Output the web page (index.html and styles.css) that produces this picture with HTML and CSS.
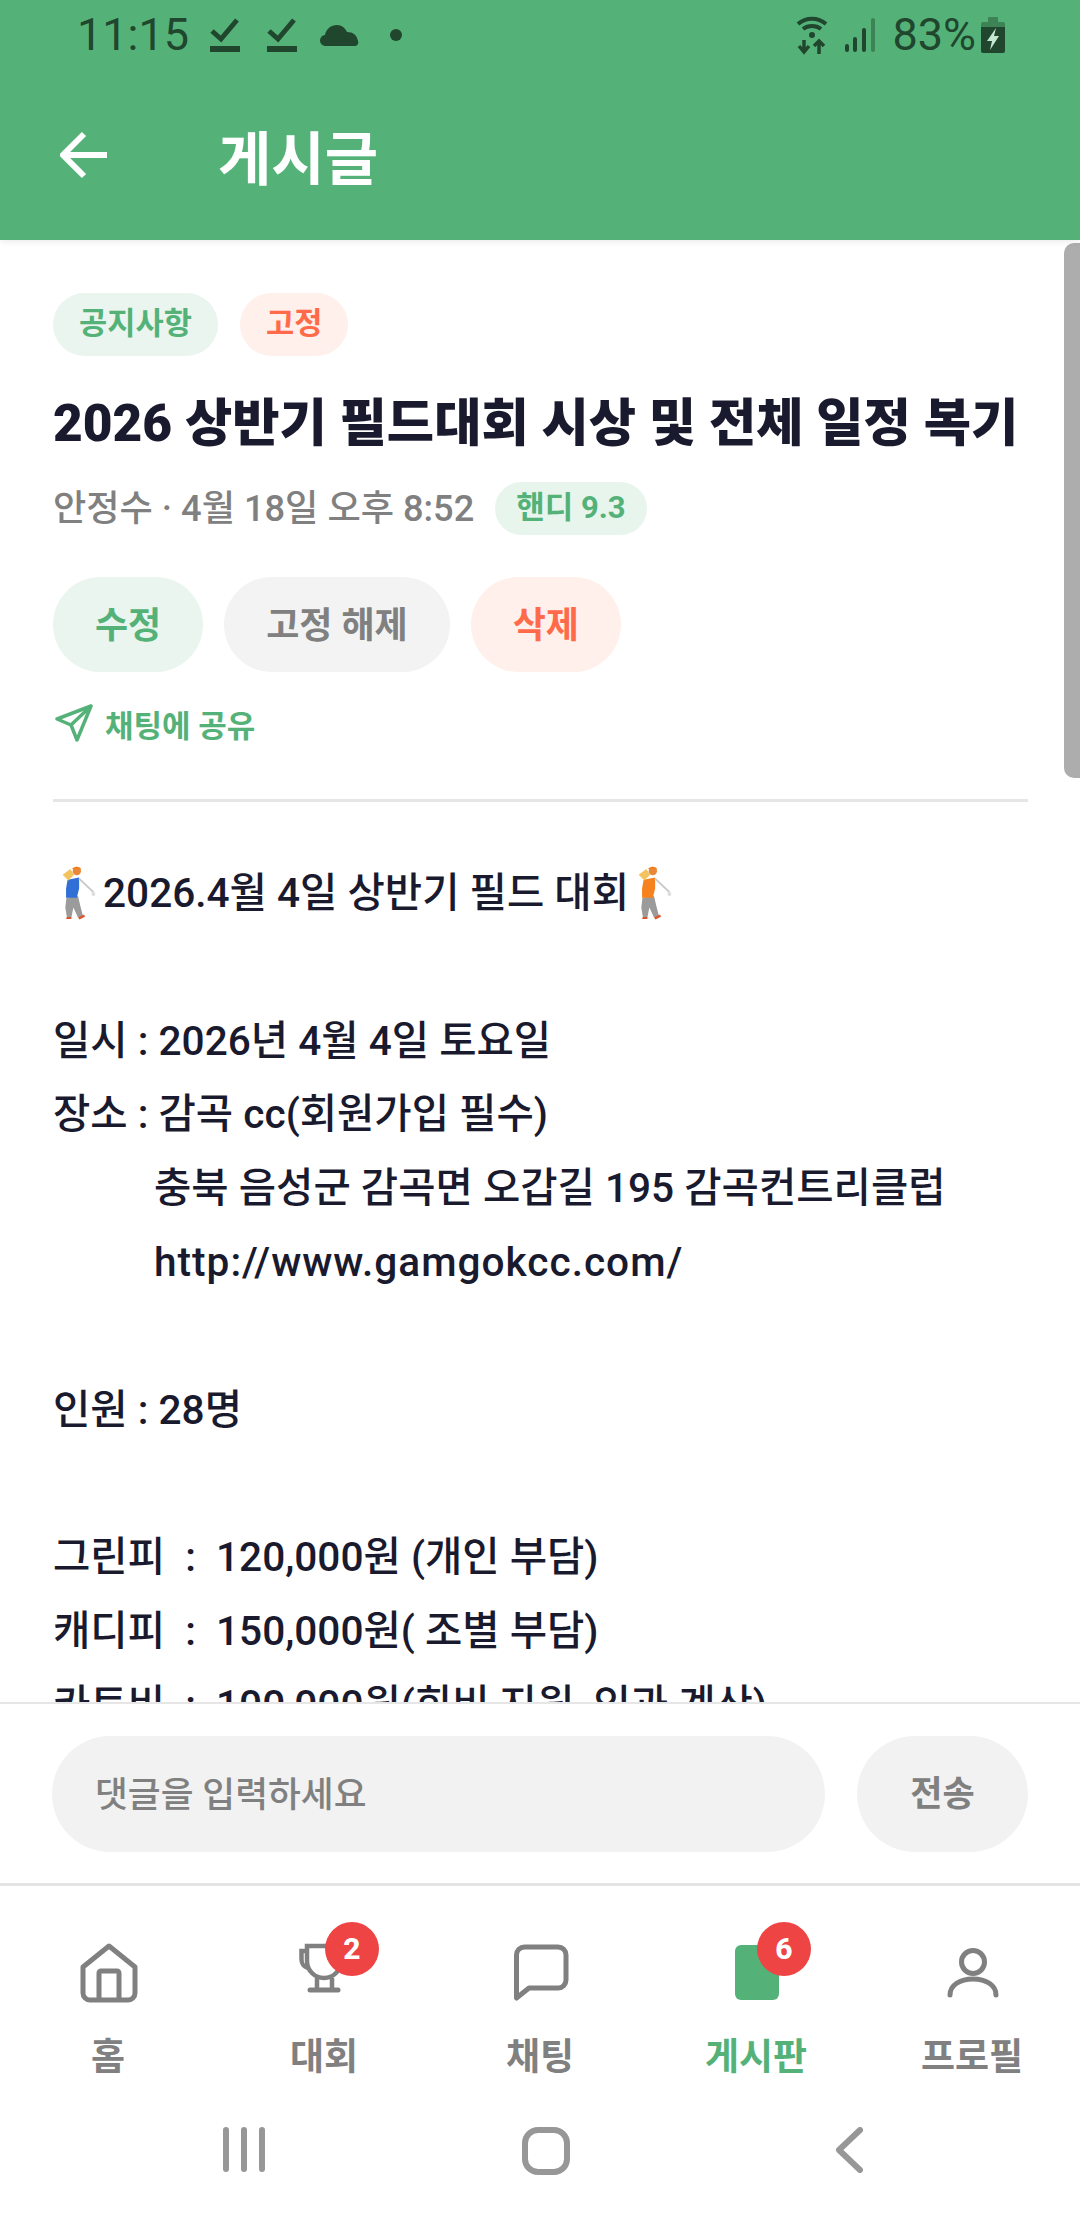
FILE: index.html
```html
<!DOCTYPE html>
<html lang="ko">

<head>
    <meta charset="UTF-8">
    <meta name="viewport" content="width=device-width, initial-scale=1.0">
    <title>게시글</title>
    <link rel="stylesheet" href="styles.css">
</head>

<body>
    <div class="app">
        <!-- 상단 -->
        <header class="top">
            <div class="status">
                <div class="status-left">
                    <span class="time">11:15</span>
                    <svg class="ic-check" viewBox="0 0 30 36"><path d="M2 14l9 8L27 3" fill="none" stroke="#20462d" stroke-width="5"/><rect y="29" width="30" height="6" fill="#20462d"/></svg>
                    <svg class="ic-check" viewBox="0 0 30 36"><path d="M2 14l9 8L27 3" fill="none" stroke="#20462d" stroke-width="5"/><rect y="29" width="30" height="6" fill="#20462d"/></svg>
                    <svg class="ic-cloud" viewBox="0 0 40 22"><path d="M7 22a5.500 5.500 0 0 1-1-11c1-6 6-10 12-10 5 0 8 3 10 7 6 0 10 3 11 9 1 3-1 5-3 5z" fill="#20462d"/></svg>
                    <span class="dot"></span>
                </div>
                <div class="status-right">
                    <svg class="ic-wifi" viewBox="0 0 32 40">
                        <path d="M2 9c8-7 20-7 28 0M7 14c5-4 13-4 18 0" fill="none" stroke="#20462d" stroke-width="4"/>
                        <circle cx="16" cy="20" r="3" fill="#20462d"/>
                        <path d="M8 25v12M3 31l5 6 5-6M23 39V26M18 31l5-5 5 5" fill="none" stroke="#20462d" stroke-width="3.500"/>
                    </svg>
                    <svg class="ic-signal" viewBox="0 0 30 34">
                        <rect x="0" y="26" width="4" height="8" rx="2" fill="#20462d"/>
                        <rect x="8" y="19" width="4" height="15" rx="2" fill="#20462d"/>
                        <rect x="17" y="10" width="4" height="24" rx="2" fill="#20462d"/>
                        <rect x="26" y="0" width="4" height="34" rx="2" fill="#3d8355"/>
                    </svg>
                    <span class="pct">83%</span>
                    <svg class="ic-batt" viewBox="0 0 24 36">
                        <path d="M7 0h10v5h5a2 2 0 0 1 2 2v3H0V7a2 2 0 0 1 2-2h5z" fill="#3d8355"/>
                        <path d="M0 10h24v24a2 2 0 0 1-2 2H2a2 2 0 0 1-2-2z" fill="#20462d"/>
                        <path d="M15 11L6 24h5l-2 9 9-14h-5z" fill="#c5e6d0"/>
                    </svg>
                </div>
            </div>
            <div class="toolbar">
                <svg class="back" viewBox="0 0 48 48"><path d="M47 24H4M24 3L3 24l21 21" fill="none" stroke="#fff" stroke-width="6"/></svg>
                <h1>게시글</h1>
            </div>
        </header>

        <!-- 본문 -->
        <main class="content">
            <div class="tags">
                <span class="tag tag-green">공지사항</span>
                <span class="tag tag-red">고정</span>
            </div>
            <h2 class="title">2026 상반기 필드대회 시상 및 전체 일정 복기</h2>
            <div class="meta">
                <span class="meta-text">안정수 · 4월 18일 오후 8:52</span>
                <span class="handy">핸디 9.3</span>
            </div>
            <div class="btns">
                <a class="btn btn-green">수정</a>
                <a class="btn btn-gray">고정 해제</a>
                <a class="btn btn-red">삭제</a>
            </div>
            <a class="share">
                <svg viewBox="0 0 38 38"><path d="M36 2L2 15l14 6 6 15zM36 2L16 21" fill="none" stroke="#54b279" stroke-width="3.500" stroke-linejoin="round" stroke-linecap="round"/></svg>
                채팅에 공유
            </a>
            <hr class="line">
            <div class="body">
                <p>
                    <svg class="golfer" viewBox="50 50 130 130"><path d="M85 125l30-5 7 30 6 22-13 4-12-26-5 25H86l-4-25z" fill="#9b9b9b"/><path d="M86 175h12v5H84zM115 176l16-8 2 6-14 7z" fill="#d8562a"/><path d="M88 78l30-6v28l-6 25H84v-25z" fill="#2f6fd6"/><path d="M75 65l20-15 10 15-15 15z" fill="#f2c35e"/><path d="M118 75l37 35" stroke="#c9c9c9" stroke-width="5" fill="none"/><circle cx="155" cy="115" r="5" fill="#ddd"/><circle cx="112" cy="55" r="11" fill="#e8893a"/><path d="M99 50q12-12 25 0z" fill="#f07f1f"/></svg>2026.4월 4일 상반기 필드 대회<svg class="golfer" viewBox="50 50 130 130"><path d="M85 125l30-5 7 30 6 22-13 4-12-26-5 25H86l-4-25z" fill="#9b9b9b"/><path d="M86 175h12v5H84zM115 176l16-8 2 6-14 7z" fill="#d8562a"/><path d="M88 78l30-6v28l-6 25H84v-25z" fill="#f5821f"/><path d="M75 65l20-15 10 15-15 15z" fill="#f2c35e"/><path d="M118 75l37 35" stroke="#c9c9c9" stroke-width="5" fill="none"/><circle cx="155" cy="115" r="5" fill="#ddd"/><circle cx="112" cy="55" r="11" fill="#e8893a"/><path d="M99 50q12-12 25 0z" fill="#f07f1f"/></svg>
                </p>
                <p>&nbsp;</p>
                <p>일시 : 2026년 4월 4일 토요일</p>
                <p>장소 : 감곡 cc(회원가입 필수)</p>
                <p class="indent">충북 음성군 감곡면 오갑길 195 감곡컨트리클럽</p>
                <p class="indent url">http://www.gamgokcc.com/</p>
                <p>&nbsp;</p>
                <p>인원 : 28명</p>
                <p>&nbsp;</p>
                <p>그린피&nbsp; :&nbsp; 120,000원 (개인 부담)</p>
                <p>캐디피&nbsp; :&nbsp; 150,000원( 조별 부담)</p>
                <p>카트비&nbsp; :&nbsp; 100,000원(회비 지원, 인과 계산)</p>
            </div>
            <div class="thumb"></div>
        </main>

        <!-- 댓글 입력 -->
        <div class="comment">
            <div class="input">댓글을 입력하세요</div>
            <a class="send">전송</a>
        </div>

        <!-- 하단 탭 -->
        <nav class="tabs">
            <a class="tab">
                <span class="tab-ic">
                    <svg viewBox="0 0 60 60"><path d="M5 24L31 3l26 21v26a7 7 0 0 1-7 7H12a7 7 0 0 1-7-7zM21 57V30a2 2 0 0 1 2-2h16a2 2 0 0 1 2 2v27" fill="none" stroke="#808080" stroke-width="5" stroke-linejoin="round"/></svg>
                </span>
                홈
            </a>
            <a class="tab">
                <span class="tab-ic">
                    <svg viewBox="0 0 60 60"><path d="M13 3h34v15a17 17 0 0 1-34 0zM13 8H7.500v8a9 9 0 0 0 6 9M23 35v11M38 35v11" fill="none" stroke="#808080" stroke-width="4.500"/><path d="M16 47h28" stroke="#808080" stroke-width="5" stroke-linecap="round"/></svg>
                    <span class="badge">2</span>
                </span>
                대회
            </a>
            <a class="tab">
                <span class="tab-ic">
                    <svg viewBox="0 0 60 60"><path d="M6.500 12a8 8 0 0 1 8-8H48a8 8 0 0 1 8 8v25a8 8 0 0 1-8 8H19L6.500 55z" fill="none" stroke="#808080" stroke-width="5" stroke-linejoin="round"/></svg>
                </span>
                채팅
            </a>
            <a class="tab tab-on">
                <span class="tab-ic">
                    <svg viewBox="0 0 60 60"><rect x="9" y="2" width="44" height="55" rx="6" fill="#54b279"/></svg>
                    <span class="badge">6</span>
                </span>
                게시판
            </a>
            <a class="tab">
                <span class="tab-ic">
                    <svg viewBox="0 0 60 60"><circle cx="31" cy="19" r="11.500" fill="none" stroke="#808080" stroke-width="5"/><path d="M8 52c0-10 10-16 23-16s23 6 23 16" fill="none" stroke="#808080" stroke-width="5" stroke-linecap="round"/></svg>
                </span>
                프로필
            </a>
        </nav>

        <!-- 시스템 내비 -->
        <div class="sysnav">
            <svg class="sys-recent" viewBox="0 0 42 45"><path d="M3 3v39M21 3v39M39 3v39" stroke="#979797" stroke-width="6" stroke-linecap="round"/></svg>
            <svg class="sys-home" viewBox="0 0 48 48"><rect x="3" y="3" width="42" height="42" rx="13" fill="none" stroke="#979797" stroke-width="6"/></svg>
            <svg class="sys-back" viewBox="0 0 28 46"><path d="M25 3L4 23l21 20" fill="none" stroke="#979797" stroke-width="6" stroke-linecap="round" stroke-linejoin="round"/></svg>
        </div>
    </div>
</body>

</html>
```

FILE: styles.css
```css
* {
    margin: 0;
    padding: 0;
    box-sizing: border-box;
}

body {
    font-family: Roboto, "Noto Sans CJK KR", sans-serif;
    background: #fff;
}

.app {
    width: 1080px;
    height: 2220px;
    display: flex;
    flex-direction: column;
    overflow: hidden;
}

/* 상단 */
.top {
    height: 240px;
    background: #54b279;
    flex: none;
    position: relative;
    z-index: 2;
    box-shadow: 0 2px 6px rgba(0, 0, 0, .08);
}

.status {
    height: 70px;
    padding: 0 75px 0 77px;
    display: flex;
    justify-content: space-between;
    align-items: center;
    color: #20462d;
}

.status-left,
.status-right {
    display: flex;
    align-items: center;
}

.time,
.pct {
    font-size: 45px;
    line-height: 70px;
}

.ic-check {
    width: 30px;
    height: 36px;
    margin-left: 21px;
}

.ic-check+.ic-check {
    margin-left: 27px;
}

.ic-cloud {
    width: 40px;
    height: 22px;
    margin-left: 22px;
}

.dot {
    width: 12px;
    height: 12px;
    border-radius: 50%;
    background: #20462d;
    margin-left: 31px;
}

.ic-wifi {
    width: 32px;
    height: 40px;
}

.ic-signal {
    width: 30px;
    height: 34px;
    margin-left: 17px;
}

.pct {
    margin-left: 17px;
}

.ic-batt {
    width: 24px;
    height: 36px;
    margin-left: 5px;
}

.toolbar {
    height: 170px;
    padding-left: 60px;
    display: flex;
    align-items: center;
}

.back {
    width: 48px;
    height: 48px;
}

.toolbar h1 {
    margin-left: 110px;
    font-size: 58px;
    font-weight: 700;
    color: #fff;
}

/* 본문 */
.content {
    flex: 1;
    min-height: 0;
    overflow: hidden;
    position: relative;
    padding: 53px 52px 0 53px;
}

.tags {
    display: flex;
    gap: 22px;
}

.tag {
    height: 63px;
    padding: 0 26px;
    border-radius: 32px;
    font-size: 30.700px;
    font-weight: 700;
    line-height: 62px;
}

.tag-green {
    background: #eaf5ef;
    color: #54b279;
}

.tag-red {
    background: #fff0eb;
    color: #ff6b4a;
}

.title {
    margin-top: 34px;
    font-size: 51.400px;
    font-weight: 900;
    line-height: 68px;
    color: #1a1a2e;
    white-space: nowrap;
}

.meta {
    margin-top: 24px;
    height: 53px;
    display: flex;
    align-items: center;
    font-size: 36.200px;
    font-weight: 500;
    color: #808080;
}

.meta-text {
    margin-bottom: 8px;
}

.handy {
    height: 53px;
    line-height: 52px;
    margin-left: 21px;
    padding: 0 21px;
    border-radius: 27px;
    background: #e8f5ec;
    color: #54b279;
    font-size: 31px;
    font-weight: 700;
}

.btns {
    margin-top: 42px;
    display: flex;
    gap: 21px;
}

.btn {
    height: 95px;
    padding: 0 42px;
    border-radius: 48px;
    font-size: 36px;
    font-weight: 700;
    line-height: 98px;
}

.btn-green {
    background: #eaf5ef;
    color: #54b279;
}

.btn-gray {
    background: #f3f3f3;
    color: #808080;
}

.btn-red {
    background: #fff0eb;
    color: #ff6b4a;
}

.share {
    margin-top: 31px;
    display: flex;
    align-items: center;
    height: 40px;
    font-size: 31px;
    font-weight: 700;
    color: #54b279;
}

.share svg {
    width: 38px;
    height: 38px;
    margin: 0 12px 0 2px;
}

.line {
    margin-top: 56px;
    border: 0;
    height: 3px;
    background: #e6e6e6;
}

.body {
    margin-top: 55px;
    font-size: 40.600px;
    font-weight: 500;
    line-height: 73.800px;
    color: #1a1a2e;
    white-space: nowrap;
}

.indent {
    padding-left: 101px;
}

.url {
    letter-spacing: 1px;
}

.golfer {
    width: 50px;
    height: 50px;
    vertical-align: -12px;
    overflow: visible;
}

/* 스크롤바 */
.thumb {
    position: absolute;
    right: 0;
    top: 3px;
    width: 16px;
    height: 535px;
    border-radius: 10px 0 0 10px;
    background: #adadad;
}

/* 댓글 입력 */
.comment {
    flex: none;
    height: 184px;
    padding: 32px 52px 0;
    display: flex;
    align-items: flex-start;
    background: #fff;
    border-top: 2px solid #e6e6e6;
    border-bottom: 3px solid #e4e4e4;
}

.input {
    flex: 1;
    height: 116px;
    padding-left: 43px;
    border-radius: 58px;
    background: #f2f2f2;
    color: #808080;
    font-size: 35.700px;
    font-weight: 500;
    line-height: 118px;
}

.send {
    width: 171px;
    height: 116px;
    margin-left: 32px;
    border-radius: 58px;
    background: #f2f2f2;
    color: #808080;
    font-size: 35px;
    font-weight: 700;
    text-align: center;
    line-height: 118px;
}

/* 하단 탭 */
.tabs {
    flex: none;
    height: 241px;
    padding-top: 57px;
    display: flex;
}

.tab {
    flex: 1;
    display: flex;
    flex-direction: column;
    align-items: center;
    font-size: 37px;
    font-weight: 600;
    line-height: 52px;
    color: #808080;
}

.tab-on {
    color: #54b279;
    font-weight: 700;
}

.tab-ic {
    position: relative;
    width: 60px;
    height: 60px;
    margin-bottom: 29px;
}

.tab-ic svg {
    display: block;
    width: 60px;
    height: 60px;
}

.badge {
    position: absolute;
    left: 31px;
    top: -21px;
    width: 54px;
    height: 54px;
    border-radius: 50%;
    background: #ef4444;
    color: #fff;
    font-size: 30px;
    font-weight: 800;
    line-height: 54px;
    text-align: center;
}

/* 시스템 내비 */
.sysnav {
    flex: none;
    height: 93px;
    display: flex;
    align-items: flex-start;
}

.sys-recent {
    width: 42px;
    height: 45px;
    margin-left: 223px;
}

.sys-home {
    width: 48px;
    height: 48px;
    margin-left: 257px;
}

.sys-back {
    width: 28px;
    height: 46px;
    margin-left: 265px;
}
```
